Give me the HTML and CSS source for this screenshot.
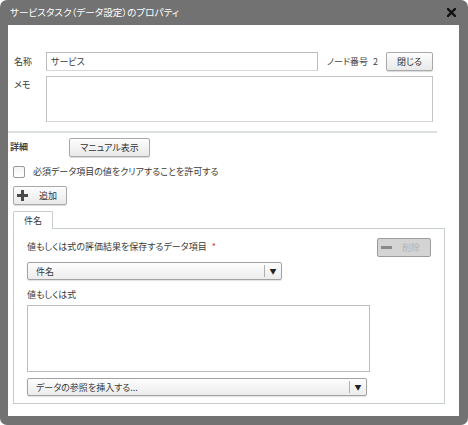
FILE: index.html
```html
<!DOCTYPE html>
<html lang="ja">
<head>
<meta charset="utf-8">
<link rel="stylesheet" href="styles.css">
</head>
<body>
<div class="dialog">
  <div class="titlebar">
    <span class="title">サービスタスク（データ設定）のプロパティ</span>
    <svg class="close" width="9" height="9" viewBox="0 0 9 9"><path d="M1 1 L8 8 M8 1 L1 8" stroke="#111" stroke-width="2.4" stroke-linecap="square"/></svg>
  </div>
  <div class="content">
    <div class="row-name">
      <span class="lbl">名称</span>
      <input class="name-input" type="text" value="サービス">
      <span class="node">ノード番号<span class="node-num">2</span></span>
      <button class="btn btn-close">閉じる</button>
    </div>
    <div class="row-memo">
      <span class="lbl lbl-memo">メモ</span>
      <div class="memo"></div>
    </div>
    <div class="sep"></div>
    <div class="row-detail">
      <span class="lbl-detail">詳細</span>
      <button class="btn btn-manual">マニュアル表示</button>
    </div>
    <div class="row-check">
      <span class="checkbox"></span>
      <span class="check-text">必須データ項目の値をクリアすることを許可する</span>
    </div>
    <button class="btn btn-add"><span class="plus"></span><span>追加</span></button>
    <div class="tabs">
      <div class="tab">件名</div>
    </div>
    <div class="panel">
      <div class="panel-head">
        <span class="field-lbl">値もしくは式の評価結果を保存するデータ項目 <span class="req">*</span></span>
        <button class="btn btn-del"><span class="minus"></span><span>削除</span></button>
      </div>
      <div class="select sel-1"><span class="sel-text">件名</span><span class="sel-arrow">▼</span></div>
      <div class="field-lbl lbl-expr">値もしくは式</div>
      <div class="expr"></div>
      <div class="select sel-2"><span class="sel-text">データの参照を挿入する...</span><span class="sel-arrow">▼</span></div>
    </div>
  </div>
</div>
</body>
</html>
```

FILE: styles.css
```css
* { box-sizing: border-box; }
html, body { margin: 0; padding: 0; background: #fff; }
body {
  font-family: "Noto Sans CJK JP", "Noto Sans", sans-serif;
  font-size: 9px;
  color: #3a3a3a;
  font-feature-settings: "palt";
}
.dialog {
  width: 468px;
  height: 425px;
  background: #727272;
  border-radius: 7px;
  padding: 0 9px 9px 8px;
  display: flex;
  flex-direction: column;
}
.titlebar {
  height: 25px;
  display: flex;
  align-items: center;
  justify-content: space-between;
  color: #fff;
  padding: 0 3px 1px 2px;
}
.title { font-size: 9.6px; }
.close { display: block; }
.content {
  flex: 1;
  background: #fff;
  padding-top: 27px;
}
.row-name {
  display: flex;
  align-items: center;
  height: 19px;
}
.lbl { width: 38px; padding-left: 6px; flex: none; }
.name-input {
  width: 272px;
  height: 19px;
  border: 1px solid #bcbcbc;
  border-bottom-color: #d8d8d8;
  padding: 0 4px;
  font: inherit;
  color: #3a3a3a;
  margin: 0;
  outline: none;
}
.node { margin-left: 9px; width: 59px; color: #444; }
.node-num { margin-left: 5px; }
.btn {
  font: inherit;
  color: #333;
  background: linear-gradient(#fdfdfd, #e9e9e9);
  border: 1px solid #a9a9a9;
  border-radius: 2px;
  box-shadow: 0 1px 1px rgba(0,0,0,0.15);
  padding: 0;
  height: 19px;
  margin: 0;
  display: flex;
  align-items: center;
  justify-content: center;
}
.btn-close { width: 47px; }
.row-memo {
  display: flex;
  margin-top: 5px;
}
.lbl-memo { padding-top: 2px; }
.memo {
  width: 387px;
  height: 46px;
  border: 1px solid #c4c4c4;
  border-bottom-color: #d4d4d4;
}
.sep {
  width: 429px;
  height: 2px;
  background: #dde1e1;
  margin-top: 9px;
}
.row-detail {
  display: flex;
  align-items: flex-start;
  margin-top: 5px;
}
.lbl-detail { width: 61px; padding-left: 2px; font-weight: bold; color: #444; padding-top: 2px; }
.btn-manual { width: 81px; height: 19px; }
.row-check {
  display: flex;
  align-items: center;
  margin-top: 8px;
  padding-left: 5px;
  height: 13px;
}
.checkbox {
  width: 12px;
  height: 12px;
  border: 1px solid #999;
  border-radius: 2px;
  background: linear-gradient(#f4f4f4, #fff);
}
.check-text { margin-left: 8px; }
.btn-add {
  margin: 8px 0 0 5px;
  width: 54px;
  height: 19px;
  justify-content: flex-start;
  padding-left: 3px;
}
.plus {
  width: 11px;
  height: 11px;
  margin-right: 11px;
  background:
    linear-gradient(#4a4a4a, #4a4a4a) center / 11px 3px no-repeat,
    linear-gradient(#4a4a4a, #4a4a4a) center / 3px 11px no-repeat;
}
.tabs {
  margin: 6px 0 0 5px;
  display: flex;
  height: 17px;
}
.tab {
  width: 40px;
  height: 18px;
  border: 1px solid #c6cbcb;
  border-bottom: none;
  background: #fff;
  display: flex;
  align-items: center;
  justify-content: center;
  position: relative;
  z-index: 1;
  border-radius: 2px 2px 0 0;
}
.panel {
  margin-left: 5px;
  width: 432px;
  height: 176px;
  border: 1px solid #c6cbcb;
  padding: 9px 0 0 13px;
}
.panel-head {
  display: flex;
  justify-content: space-between;
  align-items: flex-start;
  padding-right: 13px;
}
.field-lbl { padding-top: 2px; }
.req { color: #e03030; margin-left: 3px; }
.btn-del {
  width: 54px;
  height: 19px;
  background: #d4d4d4;
  border: 1px solid #9c9c9c;
  box-shadow: none;
  color: #b4b4b4;
  justify-content: flex-start;
  padding-left: 3px;
}
.minus {
  width: 11px;
  height: 3px;
  background: #8a8a8a;
  margin-right: 10px;
}
.select {
  height: 18px;
  border: 1px solid #a2a2a2;
  border-radius: 2px;
  background: linear-gradient(#fdfdfd, #ececec);
  box-shadow: 0 1px 1px rgba(0,0,0,0.12);
  display: flex;
  align-items: center;
  padding-left: 8px;
}
.sel-1 { width: 255px; margin-top: 5px; }
.sel-text { flex: 1; }
.sel-arrow {
  width: 17px;
  height: 12px;
  border-left: 1px solid #b0b0b0;
  font-size: 7px;
  display: flex;
  align-items: center;
  justify-content: center;
  color: #222;
}
.lbl-expr { margin-top: 6px; }
.expr {
  width: 343px;
  height: 67px;
  border: 1px solid #bcbcbc;
  margin-top: 4px;
}
.sel-2 { width: 340px; margin-top: 6px; }
```
